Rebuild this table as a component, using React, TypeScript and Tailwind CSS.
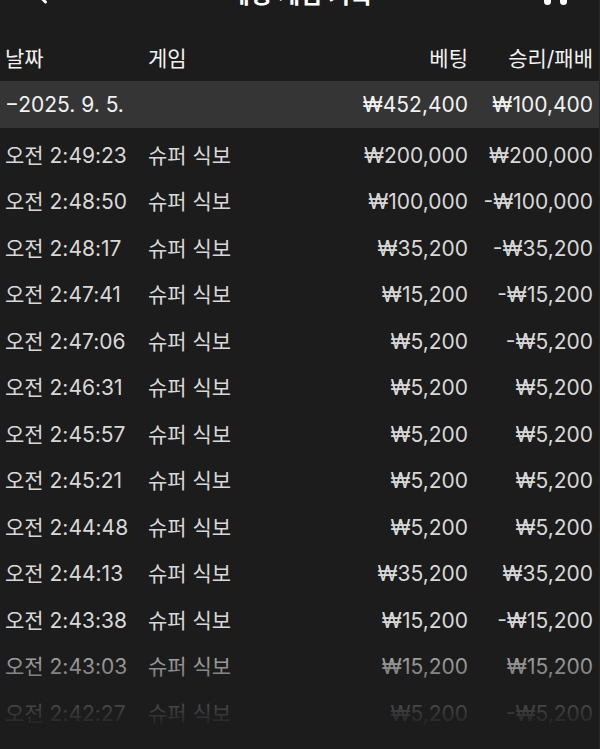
import { ChevronLeft } from 'lucide-react';

const rows = [
  { time: '오전 2:49:23', bet: '₩200,000', result: '₩200,000' },
  { time: '오전 2:48:50', bet: '₩100,000', result: '-₩100,000' },
  { time: '오전 2:48:17', bet: '₩35,200', result: '-₩35,200' },
  { time: '오전 2:47:41', bet: '₩15,200', result: '-₩15,200' },
  { time: '오전 2:47:06', bet: '₩5,200', result: '-₩5,200' },
  { time: '오전 2:46:31', bet: '₩5,200', result: '₩5,200' },
  { time: '오전 2:45:57', bet: '₩5,200', result: '₩5,200' },
  { time: '오전 2:45:21', bet: '₩5,200', result: '₩5,200' },
  { time: '오전 2:44:48', bet: '₩5,200', result: '₩5,200' },
  { time: '오전 2:44:13', bet: '₩35,200', result: '₩35,200' },
  { time: '오전 2:43:38', bet: '₩15,200', result: '-₩15,200' },
  { time: '오전 2:43:03', bet: '₩15,200', result: '₩15,200' },
  { time: '오전 2:42:27', bet: '₩5,200', result: '-₩5,200' },
];

const font = { fontFamily: '"Inter", "Noto Sans CJK KR", sans-serif' };

const App = () => {
  return (
    <div
      className="relative h-[749px] overflow-hidden bg-[#1c1c1c] text-[21px] border-r border-[#262626]"
      style={font}
    >
      {/* top bar, mostly scrolled off */}
      <div className="-mt-[27px] flex h-[44px] items-center justify-between pl-[28px] pr-[32px] text-white">
        <ChevronLeft size={28} strokeWidth={2.5} />
        <span className="text-[24px] font-semibold">베팅 게임 기록</span>
        <div className="flex gap-[9px]">
          <div className="h-[20px] w-[7px] rounded-full bg-white" />
          <div className="h-[20px] w-[7px] rounded-full bg-white" />
        </div>
      </div>

      <div className="mt-[20px] flex h-[44px] items-center pl-[5px] pr-[6px] text-[#f2f2f2]">
        <div className="w-[143px]">날짜</div>
        <div className="flex-1">게임</div>
        <div className="w-[120px] text-right">베팅</div>
        <div className="w-[125px] text-right">승리/패배</div>
      </div>

      <div className="flex h-[47px] items-center bg-[#353535] pl-[5px] pr-[6px] text-[#f2f2f2]">
        <div className="flex-1">−2025. 9. 5.</div>
        <div className="w-[120px] text-right">₩452,400</div>
        <div className="w-[125px] text-right">₩100,400</div>
      </div>

      <div className="pt-[4px] text-[#d8d8d8]">
        {rows.map((r) => (
          <div key={r.time} className="flex h-[46.5px] items-center pl-[5px] pr-[6px]">
            <div className="w-[143px]">{r.time}</div>
            <div className="flex-1">슈퍼 식보</div>
            <div className="w-[120px] text-right">{r.bet}</div>
            <div className="w-[125px] text-right">{r.result}</div>
          </div>
        ))}
      </div>

      <div className="pointer-events-none absolute inset-x-0 top-[628px] h-[100px] bg-gradient-to-b from-[#1c1c1c00] to-[#1c1c1c]" />
      <div className="absolute inset-x-0 top-[728px] h-[21px] bg-[#1c1c1c]" />
    </div>
  );
};

export default App;
